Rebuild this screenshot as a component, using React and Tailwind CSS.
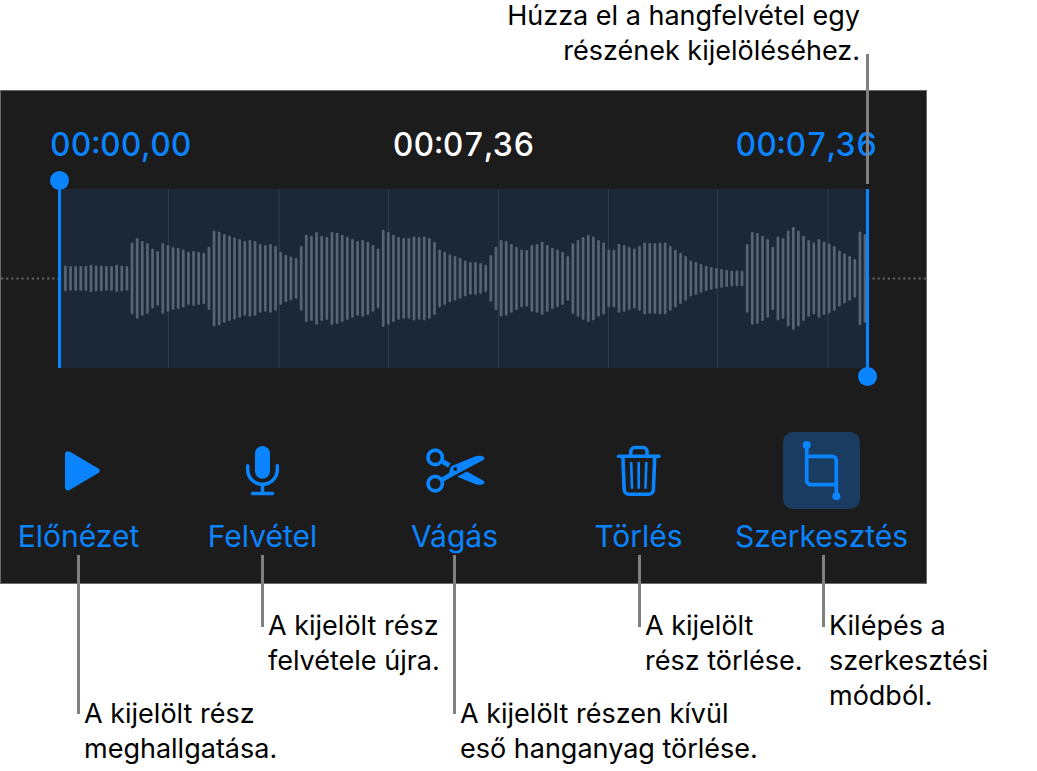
import { useState } from "react";

// Bar amplitudes as half heights, in thirds of a unit.
const LEVELS = [
  39, 37, 37, 37, 37, 41, 39, 39, 37, 37, 41, 39, 37, 108, 121, 112, 106, 90, 82, 106, 100, 94, 92, 87, 80, 82, 80,
  77, 95, 144, 141, 133, 128, 123, 118, 112, 115, 112, 103, 100, 103, 97, 79, 71, 66, 61, 97, 131, 128, 139, 128,
  125, 139, 137, 131, 125, 118, 112, 115, 110, 100, 90, 146, 139, 131, 124, 121, 121, 126, 124, 126, 121, 110, 87,
  80, 72, 67, 61, 54, 49, 49, 46, 41, 70, 95, 115, 112, 103, 95, 87, 85, 100, 103, 110, 100, 92, 87, 80, 67, 106,
  115, 124, 131, 126, 115, 108, 87, 87, 103, 100, 95, 90, 97, 108, 106, 106, 108, 108, 97, 87, 77, 67, 54, 49, 43,
  38, 34, 31, 28, 26, 24, 24, 24, 103, 139, 136, 128, 118, 95, 126, 121, 144, 154, 144, 128, 115, 108, 118, 110,
  105, 97, 84, 75, 67, 58, 141, 133,
];

const GRID_LINES = [109.5, 220, 329.5, 439.5, 549.5, 658.5, 769];

function Waveform() {
  return (
    <svg viewBox="0 0 809 179" preserveAspectRatio="none" className="block h-full w-full" aria-hidden="true">
      {GRID_LINES.map((x) => (
        <line key={x} x1={x} x2={x} y1="0" y2="179" stroke="#2d3a49" strokeWidth="1.2" />
      ))}
      {LEVELS.map((level, i) => (
        <rect
          key={i}
          x={6.4 + i * 5.126 - 1.35}
          y={89.4 - level / 3}
          width="2.7"
          height={(level * 2) / 3}
          rx="1.3"
          fill="#566474"
        />
      ))}
    </svg>
  );
}

function PlayIcon() {
  return (
    <path
      fill="currentColor"
      d="M25 22.4C25 19.6 27.6 18.4 30 19.8L58.3 36.4C60.2 37.6 60.2 39.8 58.3 41L30 57.8C27.6 59.2 25 58 25 55.2Z"
    />
  );
}

function MicIcon() {
  return (
    <>
      <rect x="31" y="14" width="15" height="32.7" rx="7.5" fill="currentColor" />
      <g fill="none" stroke="currentColor" strokeWidth="3.5" strokeLinecap="round">
        <path d="M23.7 33.7V37.5a14.8 14.8 0 0 0 29.6 0V33.7" />
        <path d="M38.5 53V61" strokeLinecap="butt" />
        <path d="M28.5 61.4H48.5" />
      </g>
    </>
  );
}

function ScissorsIcon() {
  return (
    <>
      <g fill="none" stroke="currentColor" strokeWidth="3.7">
        <circle cx="19.2" cy="25.4" r="7.2" />
        <circle cx="19.2" cy="51.6" r="7.2" />
      </g>
      <g fill="currentColor">
        <path d="M27.6 27.2L34.9 31.4C33.4 32.7 32.6 34 32.3 35.8L25.8 32Z" />
        <path
          fillRule="evenodd"
          d="M25.6 45.4L32.5 41.3C33.4 40.7 33.6 39.8 33.7 38.4C33.9 36 34.8 34.4 37 33.4L57.6 24.9C61 23.6 64 23.6 66.6 24.2C68.8 24.8 69 27.2 66.9 28.3L46.2 39.2L38.6 43.2C34 45.8 31.5 47.2 27.8 49.7ZM39.2 35.1a1.9 1.9 0 1 0 0 3.8a1.9 1.9 0 1 0 0-3.8Z"
        />
        <path d="M41.2 44.7L50.8 39.6L66.8 48.3C69 49.5 69 51.8 66.6 52.5C64 53.1 61.5 52.9 59 52Z" />
      </g>
    </>
  );
}

function TrashIcon() {
  return (
    <g fill="none" stroke="currentColor" strokeWidth="3.6" strokeLinecap="round" strokeLinejoin="round">
      <path d="M18.6 24.2H59" />
      <path d="M30.8 24V19.5a4 4 0 0 1 4-4h8.2a4 4 0 0 1 4 4V24" />
      <path d="M22.9 25l1.3 32.9a4.6 4.6 0 0 0 4.6 4.4h20a4.6 4.6 0 0 0 4.6-4.4L54.7 25" />
      <path d="M31.2 31L32 55.8M38.7 31V55.8M46.3 31L45.5 55.8" strokeWidth="2.6" />
    </g>
  );
}

function TrimIcon() {
  return (
    <>
      <g fill="none" stroke="currentColor" strokeWidth="3.7">
        <path d="M23.7 13V48.7a4 4 0 0 0 4 4H53.3" />
        <path d="M23.7 24.3H49.3a4 4 0 0 1 4 4V64.3" />
      </g>
      <circle cx="23.7" cy="13" r="4" fill="currentColor" />
      <circle cx="53.3" cy="64.3" r="4" fill="currentColor" />
    </>
  );
}

const TOOLS = [
  { label: "Előnézet", Icon: PlayIcon },
  { label: "Felvétel", Icon: MicIcon },
  { label: "Vágás", Icon: ScissorsIcon },
  { label: "Törlés", Icon: TrashIcon },
  { label: "Szerkesztés", Icon: TrimIcon, active: true },
];

function ToolButton({ label, Icon, active }) {
  return (
    <button type="button" aria-pressed={active} className="flex flex-col items-center gap-[9px] text-[#0a84ff]">
      <span className={active ? "rounded-[10px] bg-[#193c60]" : "rounded-[10px]"}>
        <svg viewBox="0 0 77 77" className="block size-[77px]" aria-hidden="true">
          <Icon />
        </svg>
      </span>
      <span className="text-[30px] leading-9 whitespace-nowrap">{label}</span>
    </button>
  );
}

function Callout({ lines, low, place }) {
  return (
    <li className={`row-start-1 flex items-start gap-1 ${place}`}>
      <span className={`w-[3px] shrink-0 bg-[#808080] ${low ? "h-[159px]" : "h-[72px]"}`} />
      <p className={`whitespace-nowrap ${low ? "pt-[141px]" : "pt-[53px]"}`}>
        {lines.map((line) => (
          <span key={line} className="block">
            {line}
          </span>
        ))}
      </p>
    </li>
  );
}

export default function App() {
  const [start, setStart] = useState(0);
  const [end, setEnd] = useState(736);

  return (
    <main className="min-h-screen overflow-x-hidden bg-white font-['Inter','Liberation_Sans',sans-serif] text-[27px] leading-[35px] text-black">
      <div className="relative z-10 mr-[168px] flex h-[90px] items-start justify-end gap-[6px]">
        <p className="-mt-0.5 text-right">
          Húzza el a hangfelvétel egy
          <br />
          részének kijelöléséhez.
        </p>
        <span className="mt-[54px] h-[130px] w-[3px] shrink-0 bg-[#808080]" />
      </div>

      <section className="mr-[110px] border border-[#6a6a6a] bg-[#1c1c1c] pt-9 pb-[29px]">
        <div className="grid grid-cols-3 px-[49px] text-[32px] leading-9 font-medium text-[#0a84ff] tabular-nums">
          <output>00:00,00</output>
          <output className="text-center text-white">00:07,36</output>
          <output className="text-right">00:07,36</output>
        </div>

        <div className="relative mt-[26px] h-[179px] px-[58px]">
          <svg className="absolute top-[88px] left-0 h-[3px] w-full" aria-hidden="true">
            <line
              x1="0"
              x2="100%"
              y1="1.5"
              y2="1.5"
              stroke="#636363"
              strokeWidth="2.2"
              strokeDasharray="2.2 2.926"
            />
          </svg>
          <div className="relative h-full bg-[#1c2838]">
            <Waveform />
            <span className="absolute -top-[9px] -left-px h-[188px] w-[3px] bg-[#0a84ff]" />
            <span className="absolute -top-[18px] -left-[9px] size-[19px] rounded-full bg-[#0a84ff]" />
            <span className="absolute top-0 -right-px h-[188px] w-[3px] bg-[#0a84ff]" />
            <span className="absolute -right-[9px] -bottom-[18px] size-[19px] rounded-full bg-[#0a84ff]" />
            <input
              type="range"
              aria-label="Kijelölés kezdete"
              min="0"
              max="736"
              value={start}
              onChange={(e) => setStart(Math.min(Number(e.target.value), end))}
              className="absolute -top-[18px] left-0 h-[19px] w-full opacity-0"
            />
            <input
              type="range"
              aria-label="Kijelölés vége"
              min="0"
              max="736"
              value={end}
              onChange={(e) => setEnd(Math.max(Number(e.target.value), start))}
              className="absolute -bottom-[18px] left-0 h-[19px] w-full opacity-0"
            />
          </div>
        </div>

        <div className="mt-16 grid grid-cols-[155fr_213fr_171fr_197fr_minmax(0,169fr)] justify-items-center pr-5">
          {TOOLS.map((tool) => (
            <ToolButton key={tool.label} {...tool} />
          ))}
        </div>
      </section>

      <ul className="relative z-10 -mt-[29px] grid grid-cols-[184fr_192fr_185fr_184fr_215fr] pl-[77px]">
        <Callout low place="col-start-1 col-span-2" lines={["A kijelölt rész", "meghallgatása."]} />
        <Callout place="col-start-2" lines={["A kijelölt rész", "felvétele újra."]} />
        <Callout low place="col-start-3 col-span-2" lines={["A kijelölt részen kívül", "eső hanganyag törlése."]} />
        <Callout place="col-start-4" lines={["A kijelölt", "rész törlése."]} />
        <Callout place="col-start-5" lines={["Kilépés a", "szerkesztési", "módból."]} />
      </ul>
    </main>
  );
}
